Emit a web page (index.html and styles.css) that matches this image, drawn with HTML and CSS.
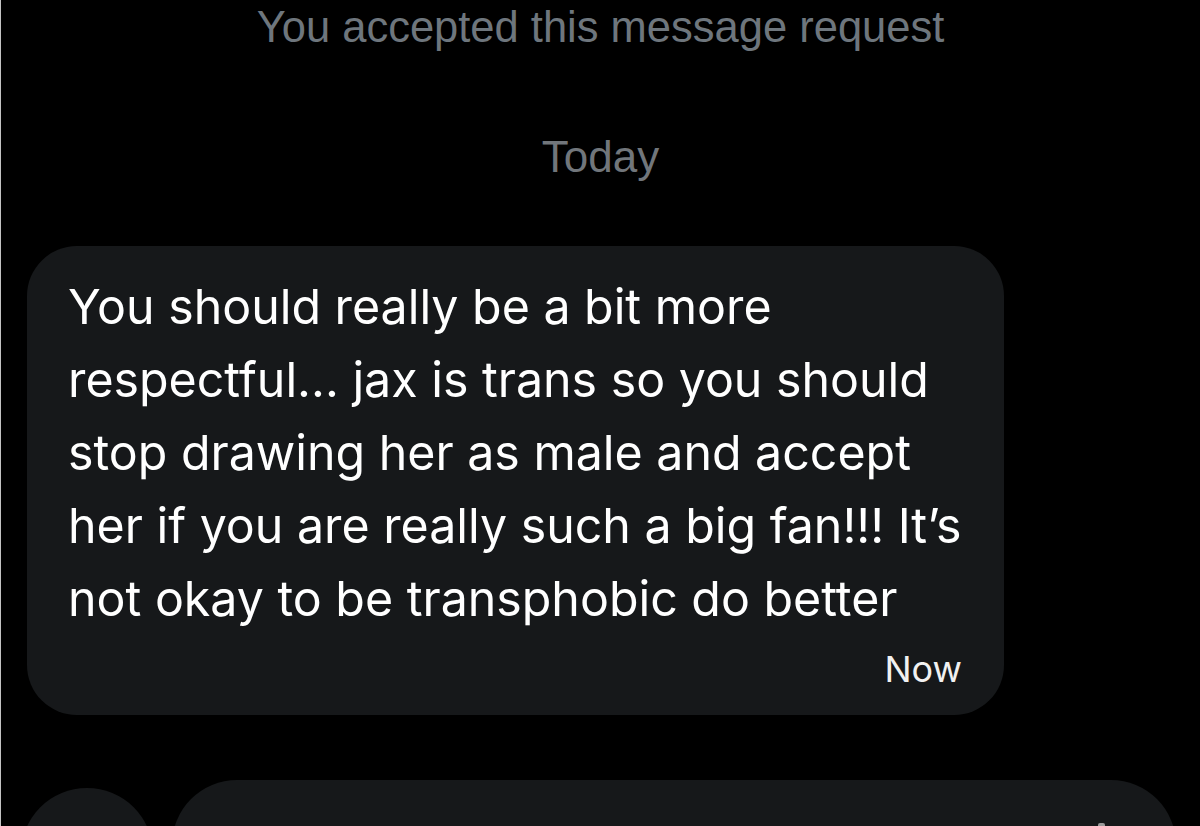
FILE: index.html
```html
<!DOCTYPE html>
<html lang="en">
<head>
    <meta charset="UTF-8">
    <meta name="viewport" content="width=device-width, initial-scale=1.0">
    <title>Message request</title>
    <link rel="stylesheet" href="styles.css">
</head>
<body>

<div class="screen">
    <!-- System notice -->
    <p class="notice">You accepted this message request</p>

    <!-- Day divider -->
    <p class="day">Today</p>

    <!-- Incoming message -->
    <div class="bubble">
        <p class="bubble-text">You should really be a bit more respectful... jax is trans so you should stop drawing her as male and accept her if you are really such a big fan!!! It&rsquo;s not okay to be transphobic do better</p>
        <div class="bubble-time">Now</div>
    </div>

    <!-- Composer (cut off at bottom) -->
    <div class="composer">
        <div class="composer-btn"></div>
        <div class="composer-input">
            <span class="composer-icon"></span>
        </div>
    </div>
</div>

</body>
</html>
```

FILE: styles.css
```css
body {
    margin: 0;
    padding: 0;
    background-color: #000;
    font-family: Inter, "Liberation Sans", Arial, sans-serif;
}
.screen {
    height: 826px;
    overflow: hidden;
    border-left: 1px solid #c4c4c4;
    box-sizing: border-box;
}
.notice {
    margin: 0;
    padding-top: 5px;
    text-align: center;
    font-family: "Liberation Sans Narrow", "Liberation Sans", Arial, sans-serif;
    font-size: 43.5px;
    line-height: 44px;
    color: #6e767d;
}
.day {
    margin: 86px 0 0;
    text-align: center;
    font-family: "Liberation Sans", Arial, sans-serif;
    font-size: 44px;
    line-height: 44px;
    color: #71767b;
}
.bubble {
    margin: 67px 0 0 26px;
    width: 977px;
    box-sizing: border-box;
    padding: 24px 34px 23px 41px;
    background-color: #16181a;
    border-radius: 50px;
}
.bubble-text {
    margin: 0;
    font-size: 48.3px;
    line-height: 73px;
    color: #fff;
}
.bubble-time {
    margin: 11px 8px 0 0;
    text-align: right;
    font-size: 36px;
    line-height: 46px;
    color: #f1f1f1;
}
.composer {
    display: flex;
    align-items: flex-start;
    gap: 19px;
    margin-top: 65px;
    padding-left: 20px;
}
.composer-btn {
    flex: none;
    width: 132px;
    height: 132px;
    margin-top: 8px;
    border-radius: 50%;
    background-color: #16181a;
}
.composer-input {
    position: relative;
    flex: none;
    width: 1004px;
    height: 130px;
    border-radius: 66px;
    background-color: #16181a;
}
.composer-icon {
    position: absolute;
    left: 926px;
    top: 43px;
    width: 7px;
    height: 30px;
    border-radius: 2px;
    background-color: #9a9a9a;
}
```
